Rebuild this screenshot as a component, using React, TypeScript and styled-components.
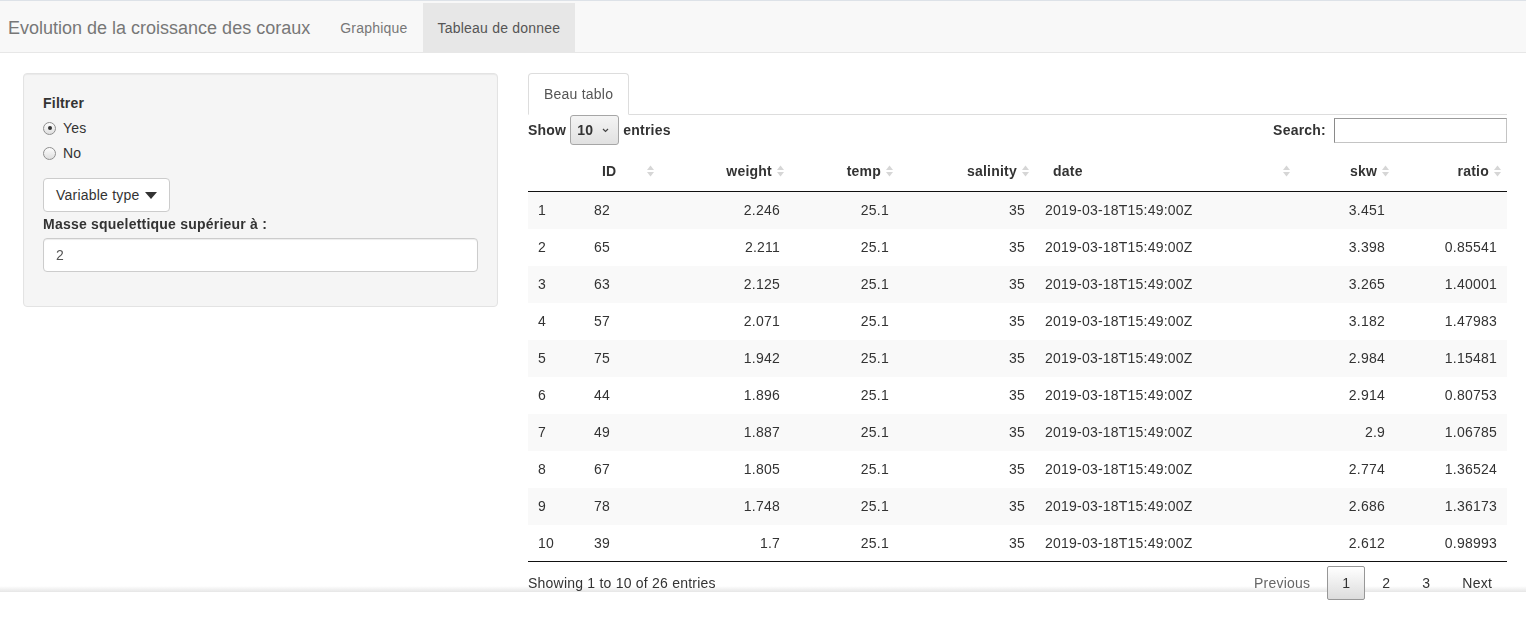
import React from "react";
import styled, { createGlobalStyle } from "styled-components";

const GlobalStyle = createGlobalStyle`
  html, body { margin: 0; padding: 0; background: #fff; }
  body {
    font-family: "Liberation Sans", Arial, Helvetica, sans-serif;
    font-size: 14px;
    line-height: 20px;
    letter-spacing: 0.22px;
    color: #333;
  }
  * { box-sizing: border-box; }
`;

const Navbar = styled.nav`
  position: relative;
  z-index: 1;
  display: flex;
  align-items: stretch;
  height: 53px;
  padding-top: 2px;
  background: #f8f8f8;
  border-top: 1px solid #dde2e8;
  border-bottom: 1px solid #e7e7e7;
`;

const Brand = styled.div`
  display: flex;
  align-items: center;
  padding: 0 15px 0 8px;
  font-size: 18px;
  letter-spacing: 0;
  color: #777;
  white-space: nowrap;
`;

const NavItem = styled.div<{ $active?: boolean }>`
  display: flex;
  align-items: center;
  padding: 0 15px;
  color: ${(p) => (p.$active ? "#555" : "#777")};
  background: ${(p) => (p.$active ? "#e7e7e7" : "transparent")};
`;

const Main = styled.main`
  position: relative;
  z-index: 1;
  display: flex;
  align-items: flex-start;
  gap: 30px;
  padding: 20px 19px 0 23px;
`;

const Well = styled.section`
  width: 475px;
  flex: none;
  padding: 19px;
  background: #f5f5f5;
  border: 1px solid #e3e3e3;
  border-radius: 4px;
  box-shadow: inset 0 1px 1px rgba(0, 0, 0, 0.05);
`;

const FieldLabel = styled.div<{ $gap?: number }>`
  font-weight: bold;
  margin-bottom: ${(p) => p.$gap ?? 5}px;
`;

const RadioGroup = styled.div`
  display: flex;
  flex-direction: column;
  gap: 5px;
  margin-bottom: 15px;
`;

const RadioRow = styled.label`
  display: flex;
  align-items: center;
  gap: 7px;
  height: 20px;
`;

const RadioDot = styled.span<{ $checked?: boolean }>`
  position: relative;
  width: 13px;
  height: 13px;
  border-radius: 50%;
  border: 1px solid #8e8e8e;
  background: linear-gradient(to bottom, #fdfdfd, #dedede);
  &::after {
    content: "";
    display: ${(p) => (p.$checked ? "block" : "none")};
    position: absolute;
    left: 3.5px;
    top: 3.5px;
    width: 4px;
    height: 4px;
    border-radius: 50%;
    background: #333;
  }
`;

const DropButton = styled.button`
  display: inline-flex;
  align-items: center;
  gap: 5px;
  height: 34px;
  padding: 6px 12px;
  font-family: inherit;
  font-size: 14px;
  letter-spacing: 0.22px;
  color: #333;
  background: #fff;
  border: 1px solid #ccc;
  border-radius: 4px;
  margin-bottom: 2px;
`;

const TextInput = styled.div`
  height: 34px;
  padding: 6px 12px;
  color: #555;
  background: #fff;
  border: 1px solid #ccc;
  border-radius: 4px;
  box-shadow: inset 0 1px 1px rgba(0, 0, 0, 0.075);
  margin-bottom: 15px;
`;

const Content = styled.section`
  flex: 1;
  min-width: 0;
`;

const TabBar = styled.div`
  display: flex;
  border-bottom: 1px solid #ddd;
`;

const Tab = styled.div<{ $active?: boolean }>`
  padding: 10px 15px;
  margin-bottom: -1px;
  color: #555;
  background: ${(p) => (p.$active ? "#fff" : "transparent")};
  border: 1px solid ${(p) => (p.$active ? "#ddd" : "transparent")};
  border-bottom-color: transparent;
  border-radius: 4px 4px 0 0;
`;

const Controls = styled.div`
  display: flex;
  justify-content: space-between;
  align-items: center;
  height: 30px;
  margin-bottom: 6px;
`;

const CtlLabel = styled.label`
  display: flex;
  align-items: center;
  gap: 4px;
  font-weight: bold;
`;

const SelectBox = styled.span`
  display: inline-flex;
  align-items: center;
  justify-content: space-between;
  width: 49px;
  height: 30px;
  padding: 0 9px 0 6px;
  font-weight: bold;
  background: linear-gradient(to bottom, #f4f4f4, #e1e1e1);
  border: 1px solid #a6a6a6;
  border-radius: 3px;
`;

const SearchInput = styled.span`
  display: inline-block;
  width: 173px;
  height: 25px;
  margin-left: 4px;
  background: #fff;
  border: 1px solid #c4c4c4;
  border-left-color: #8a8a8a;
  border-top-color: #9a9a9a;
`;

const Table = styled.table`
  width: 100%;
  border-collapse: collapse;
  table-layout: fixed;
`;

const Th = styled.th<{ $align?: string }>`
  position: relative;
  padding: 10px 18px;
  text-align: ${(p) => p.$align ?? "left"};
  font-weight: bold;
  border-bottom: 1px solid #111;
  white-space: nowrap;
`;

const SortIcon = styled.svg`
  position: absolute;
  right: 5px;
  top: 50%;
  transform: translateY(-50%);
`;

const Tr = styled.tr<{ $odd?: boolean }>`
  background: ${(p) => (p.$odd ? "#f9f9f9" : "#fff")};
  & + & td { border-top: 1px solid #ddd; }
  &:last-child td { border-bottom: 1px solid #111; }
`;

const Td = styled.td<{ $align?: string }>`
  padding: 8px 10px;
  height: 37px;
  text-align: ${(p) => p.$align ?? "left"};
  white-space: nowrap;
`;

const Footer = styled.div`
  display: flex;
  justify-content: space-between;
  align-items: flex-start;
`;

const Info = styled.div`
  padding-top: 11px;
`;

const Pager = styled.div`
  display: flex;
  padding-top: 4px;
`;

const PageBtn = styled.span<{ $current?: boolean; $disabled?: boolean }>`
  display: inline-block;
  min-width: 21px;
  padding: 6px 14px;
  margin-left: 2px;
  line-height: 20px;
  text-align: center;
  color: ${(p) => (p.$disabled ? "#666" : "#333")};
  border: 1px solid ${(p) => (p.$current ? "#979797" : "transparent")};
  border-radius: 2px;
  background: ${(p) =>
    p.$current ? "linear-gradient(to bottom, #fff 0%, #dcdcdc 100%)" : "transparent"};
`;

const BottomShade = styled.div`
  position: fixed;
  left: 0;
  right: 0;
  top: 586px;
  height: 6px;
  z-index: 0;
  background: linear-gradient(to bottom, rgba(230, 230, 230, 0), #e6e6e6);
`;

const Sort = () => (
  <SortIcon width="9" height="14" viewBox="0 0 9 14">
    <path d="M1 6 L4.5 1.5 L8 6 Z" fill="#d6d6d6" />
    <path d="M1 8 L4.5 12.5 L8 8 Z" fill="#d6d6d6" />
  </SortIcon>
);

type Col = { key: string; label: string; width: number; align: "left" | "right"; sort: boolean };

const cols: Col[] = [
  { key: "n", label: "", width: 56, align: "left", sort: false },
  { key: "id", label: "ID", width: 76, align: "left", sort: true },
  { key: "weight", label: "weight", width: 130, align: "right", sort: true },
  { key: "temp", label: "temp", width: 109, align: "right", sort: true },
  { key: "salinity", label: "salinity", width: 136, align: "right", sort: true },
  { key: "date", label: "date", width: 261, align: "left", sort: true },
  { key: "skw", label: "skw", width: 99, align: "right", sort: true },
  { key: "ratio", label: "ratio", width: 112, align: "right", sort: true },
];

const rows: string[][] = [
  ["1", "82", "2.246", "25.1", "35", "2019-03-18T15:49:00Z", "3.451", ""],
  ["2", "65", "2.211", "25.1", "35", "2019-03-18T15:49:00Z", "3.398", "0.85541"],
  ["3", "63", "2.125", "25.1", "35", "2019-03-18T15:49:00Z", "3.265", "1.40001"],
  ["4", "57", "2.071", "25.1", "35", "2019-03-18T15:49:00Z", "3.182", "1.47983"],
  ["5", "75", "1.942", "25.1", "35", "2019-03-18T15:49:00Z", "2.984", "1.15481"],
  ["6", "44", "1.896", "25.1", "35", "2019-03-18T15:49:00Z", "2.914", "0.80753"],
  ["7", "49", "1.887", "25.1", "35", "2019-03-18T15:49:00Z", "2.9", "1.06785"],
  ["8", "67", "1.805", "25.1", "35", "2019-03-18T15:49:00Z", "2.774", "1.36524"],
  ["9", "78", "1.748", "25.1", "35", "2019-03-18T15:49:00Z", "2.686", "1.36173"],
  ["10", "39", "1.7", "25.1", "35", "2019-03-18T15:49:00Z", "2.612", "0.98993"],
];

export default function App() {
  return (
    <>
      <GlobalStyle />
      <Navbar>
        <Brand>Evolution de la croissance des coraux</Brand>
        <NavItem>Graphique</NavItem>
        <NavItem $active>Tableau de donnee</NavItem>
      </Navbar>
      <Main>
        <Well>
          <FieldLabel>Filtrer</FieldLabel>
          <RadioGroup>
            <RadioRow>
              <RadioDot $checked />
              Yes
            </RadioRow>
            <RadioRow>
              <RadioDot />
              No
            </RadioRow>
          </RadioGroup>
          <DropButton>
            Variable type
            <svg width="12" height="7" viewBox="0 0 12 7">
              <path d="M0 0 H12 L6 7 Z" fill="#333" />
            </svg>
          </DropButton>
          <FieldLabel $gap={4}>Masse squelettique supérieur à :</FieldLabel>
          <TextInput>2</TextInput>
        </Well>
        <Content>
          <TabBar>
            <Tab $active>Beau tablo</Tab>
          </TabBar>
          <Controls>
            <CtlLabel>
              Show
              <SelectBox>
                10
                <svg width="7" height="5" viewBox="0 0 7 5">
                  <path d="M1 1 L3.5 3.5 L6 1" stroke="#444" strokeWidth="1.2" fill="none" />
                </svg>
              </SelectBox>
              entries
            </CtlLabel>
            <CtlLabel>
              Search:
              <SearchInput />
            </CtlLabel>
          </Controls>
          <Table>
            <colgroup>
              {cols.map((c) => (
                <col key={c.key} style={{ width: c.width }} />
              ))}
            </colgroup>
            <thead>
              <tr>
                {cols.map((c) => (
                  <Th key={c.key} $align={c.align}>
                    {c.label}
                    {c.sort && <Sort />}
                  </Th>
                ))}
              </tr>
            </thead>
            <tbody>
              {rows.map((r, i) => (
                <Tr key={i} $odd={i % 2 === 0}>
                  {r.map((v, j) => (
                    <Td key={j} $align={cols[j].align}>
                      {v}
                    </Td>
                  ))}
                </Tr>
              ))}
            </tbody>
          </Table>
          <Footer>
            <Info>Showing 1 to 10 of 26 entries</Info>
            <Pager>
              <PageBtn $disabled>Previous</PageBtn>
              <PageBtn $current>1</PageBtn>
              <PageBtn>2</PageBtn>
              <PageBtn>3</PageBtn>
              <PageBtn>Next</PageBtn>
            </Pager>
          </Footer>
        </Content>
      </Main>
      <BottomShade />
    </>
  );
}
